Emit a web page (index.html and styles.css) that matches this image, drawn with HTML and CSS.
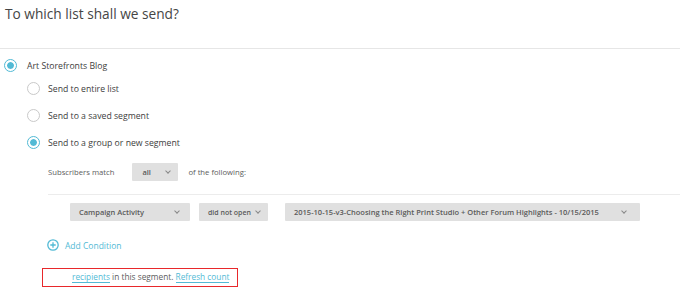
FILE: index.html
```html
<!DOCTYPE html>
<html lang="en">
<head>
  <meta charset="UTF-8">
  <title>To which list shall we send?</title>
  <link rel="stylesheet" href="styles.css">
</head>
<body>
  <h2 class="page-title">To which list shall we send?</h2>

  <section class="list-picker">
    <label class="radio-row">
      <span class="radio checked"></span>
      <span>Art Storefronts Blog</span>
    </label>

    <div class="segment-options">
      <label class="radio-row">
        <span class="radio"></span>
        <span>Send to entire list</span>
      </label>
      <label class="radio-row">
        <span class="radio"></span>
        <span>Send to a saved segment</span>
      </label>
      <label class="radio-row">
        <span class="radio checked"></span>
        <span>Send to a group or new segment</span>
      </label>
    </div>

    <div class="segment-builder">
      <div class="match-row">
        <span>Subscribers match</span>
        <span class="select select-all">all <i class="caret"></i></span>
        <span>of the following:</span>
      </div>

      <div class="condition-row">
        <span class="select select-field">Campaign Activity <i class="caret"></i></span>
        <span class="select select-op">did not open <i class="caret"></i></span>
        <span class="select select-campaign">2015-10-15-v3-Choosing the Right Print Studio + Other Forum Highlights - 10/15/2015 <i class="caret"></i></span>
      </div>

      <a class="add-condition" href="#">
        <svg width="12" height="12" viewBox="0 0 12 12">
          <circle cx="6" cy="6" r="5.2" fill="none" stroke="#52bad5" stroke-width="1.3"/>
          <path d="M6 3.3v5.4M3.3 6h5.4" stroke="#52bad5" stroke-width="1.3"/>
        </svg>
        Add Condition
      </a>

      <div class="segment-count">
        <a href="#">recipients</a> in this segment. <a href="#">Refresh count</a>
      </div>
    </div>
  </section>
</body>
</html>
```

FILE: styles.css
```css
*, *::before, *::after {
  box-sizing: border-box;
}
body {
  margin: 0;
  font-family: 'Open Sans', sans-serif;
  color: #555;
  background: white;
  font-size: 8.7px;
}
.page-title {
  margin: 0;
  padding: 4px 0 0 5px;
  height: 49px;
  font-size: 13.7px;
  font-weight: 400;
  color: #454545;
  border-bottom: 1px solid #e6e6e6;
}

/* list radios */
.list-picker {
  padding: 10px 0 0 4px;
}
.radio-row {
  display: flex;
  align-items: center;
  gap: 10px;
  height: 13px;
  color: #3d3d3d;
}
.radio {
  width: 13px;
  height: 13px;
  border-radius: 50%;
  border: 1px solid #c9c9c9;
  background: white;
  flex-shrink: 0;
}
.radio.checked {
  border: 1.5px solid #52bad5;
  padding: 2px;
  background: #52bad5;
  background-clip: content-box;
  box-shadow: inset 0 0 0 2px white;
}
.segment-options {
  padding: 10px 0 0 23px;
  display: flex;
  flex-direction: column;
  gap: 14px;
}
.segment-options .radio-row {
  gap: 8px;
}

/* segment builder */
.segment-builder {
  padding: 14px 0 0 44px;
}
.match-row {
  display: flex;
  align-items: center;
  gap: 10px;
  height: 17px;
  font-size: 7.7px;
  color: #5d5d5d;
}
.select {
  display: inline-flex;
  align-items: center;
  justify-content: space-between;
  height: 18px;
  padding: 0 9px;
  background: #e0e0e0;
  border-radius: 1px;
  font-size: 7.5px;
  font-weight: 600;
  color: #5a5a5a;
  white-space: nowrap;
}
.caret {
  width: 4px;
  height: 4px;
  border-right: 1px solid #888;
  border-bottom: 1px solid #888;
  transform: rotate(45deg);
  margin: 0 2px 2px 0;
}
.select-all {
  width: 46px;
  margin-left: 8px;
  padding: 0 6px 0 10px;
}
.condition-row {
  display: flex;
  gap: 9px;
  margin-top: 14px;
  padding: 8px 0 0 22px;
  border-top: 1px solid #ececec;
}
.select-field {
  width: 120px;
}
.select-op {
  width: 69px;
  padding: 0 6px 0 9px;
  font-size: 7px;
}
.select-campaign {
  width: 355px;
  margin-left: 8px;
  padding-right: 12px;
}
.add-condition {
  display: flex;
  align-items: center;
  gap: 6px;
  margin: 18px 0 0 -1px;
  font-size: 8.5px;
  color: #52bad5;
  text-decoration: none;
}
.segment-count {
  width: 196px;
  height: 19px;
  margin: 17px 0 0 -6px;
  padding: 2px 0 0 29px;
  border: 1.5px solid #e8282b;
  font-size: 8.3px;
  color: #5d5d5d;
  white-space: nowrap;
}
.segment-count a {
  color: #52bad5;
  text-decoration: none;
  border-bottom: 1px solid #52bad5;
}
```
